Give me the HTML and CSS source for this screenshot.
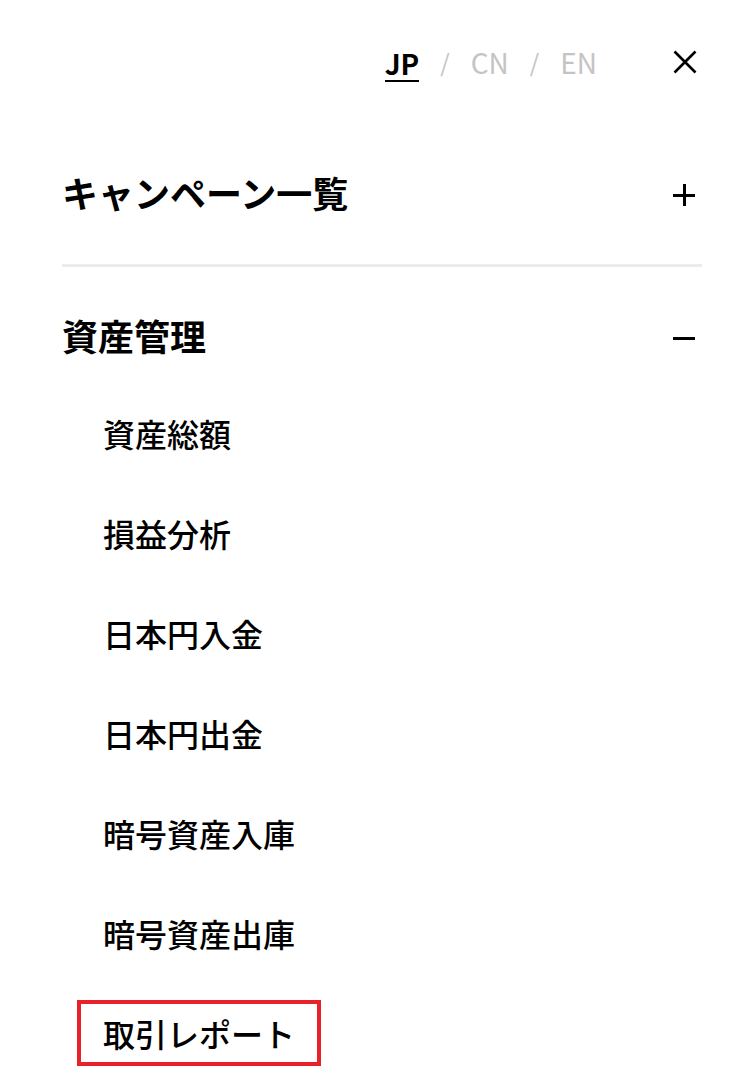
FILE: index.html
```html
<!DOCTYPE html>
<html lang="ja">
<head>
    <meta charset="UTF-8">
    <meta name="viewport" content="width=device-width, initial-scale=1.0">
    <title>メニュー</title>
    <link rel="stylesheet" href="styles.css">
</head>
<body>
    <div class="menu">
        <!-- Language switch and close button -->
        <div class="topbar">
            <div class="lang">
                <a href="#" class="lang-item active">JP</a>
                <span class="sep">/</span>
                <a href="#" class="lang-item">CN</a>
                <span class="sep">/</span>
                <a href="#" class="lang-item">EN</a>
            </div>
            <button class="close" aria-label="閉じる">
                <svg width="24" height="24" viewBox="0 0 24 24">
                    <path d="M1.5 1.5 L22.5 22.5 M22.5 1.5 L1.5 22.5" stroke="#000" stroke-width="2.6" fill="none"/>
                </svg>
            </button>
        </div>

        <!-- Collapsed group -->
        <div class="group first">
            <div class="group-head">
                <span class="group-title">キャンペーン一覧</span>
                <span class="toggle plus"></span>
            </div>
        </div>

        <!-- Expanded group -->
        <div class="group">
            <div class="group-head">
                <span class="group-title">資産管理</span>
                <span class="toggle minus"></span>
            </div>
            <ul class="sub">
                <li><a href="#">資産総額</a></li>
                <li><a href="#">損益分析</a></li>
                <li><a href="#">日本円入金</a></li>
                <li><a href="#">日本円出金</a></li>
                <li><a href="#">暗号資産入庫</a></li>
                <li><a href="#">暗号資産出庫</a></li>
                <li><a href="#" class="marked">取引レポート</a></li>
            </ul>
        </div>
    </div>
    <div class="below"></div>
</body>
</html>
```

FILE: styles.css
```css
* {
    box-sizing: border-box;
    margin: 0;
    padding: 0;
}

body {
    font-family: "Noto Sans CJK JP", "Noto Sans", sans-serif;
    background: #ffffff;
    color: #000000;
    width: 748px;
    overflow: hidden;
}

a {
    color: inherit;
    text-decoration: none;
}

.menu {
    padding: 0 46px 0 62px;
}

.topbar {
    height: 124px;
    display: flex;
    align-items: center;
    justify-content: flex-end;
    padding-right: 5px;
}

.lang {
    display: flex;
    align-items: center;
    gap: 21px;
    margin-right: 76px;
    font-size: 28px;
    line-height: 1;
}

.lang-item {
    color: #c4c4c4;
}

.lang-item.active {
    color: #000;
    font-weight: 700;
    padding-bottom: 3px;
    border-bottom: 2.5px solid #000;
    margin-top: 6px;
}

.sep {
    color: #c4c4c4;
    font-size: 24px;
}

.close {
    border: none;
    background: none;
    width: 24px;
    height: 24px;
    display: block;
    cursor: pointer;
}

.close svg {
    display: block;
}

.group.first {
    padding: 32px 0 36px;
    border-bottom: 3px solid #ebebeb;
}

.group {
    padding-top: 32px;
}

.group-head {
    height: 72px;
    display: flex;
    align-items: center;
    justify-content: space-between;
}

.group-title {
    font-size: 36px;
    font-weight: 700;
    line-height: 1;
}

/* plus / minus drawn with two bars */
.toggle {
    position: relative;
    width: 22px;
    height: 22px;
    margin: 6px 7px 0 0;
}

.toggle::before,
.toggle::after {
    content: "";
    position: absolute;
    background: #000;
}

.toggle::before {
    left: 0;
    right: 0;
    top: 10px;
    height: 2.5px;
}

.toggle.plus::after {
    top: 0;
    bottom: 0;
    left: 10px;
    width: 2.5px;
}

.toggle.minus::after {
    display: none;
}

.sub {
    list-style: none;
    margin-top: 12px;
    padding-left: 41px;
}

.sub li {
    height: 100px;
    display: flex;
    align-items: center;
}

.sub a {
    font-size: 32px;
    font-weight: 500;
    line-height: 1;
}

.sub a.marked {
    display: flex;
    align-items: center;
    height: 66px;
    margin-left: -26px;
    padding: 0 22px;
    border: 4px solid #e8212b;
}

.below {
    height: 20px;
    background: #f9f9f9;
}
```
